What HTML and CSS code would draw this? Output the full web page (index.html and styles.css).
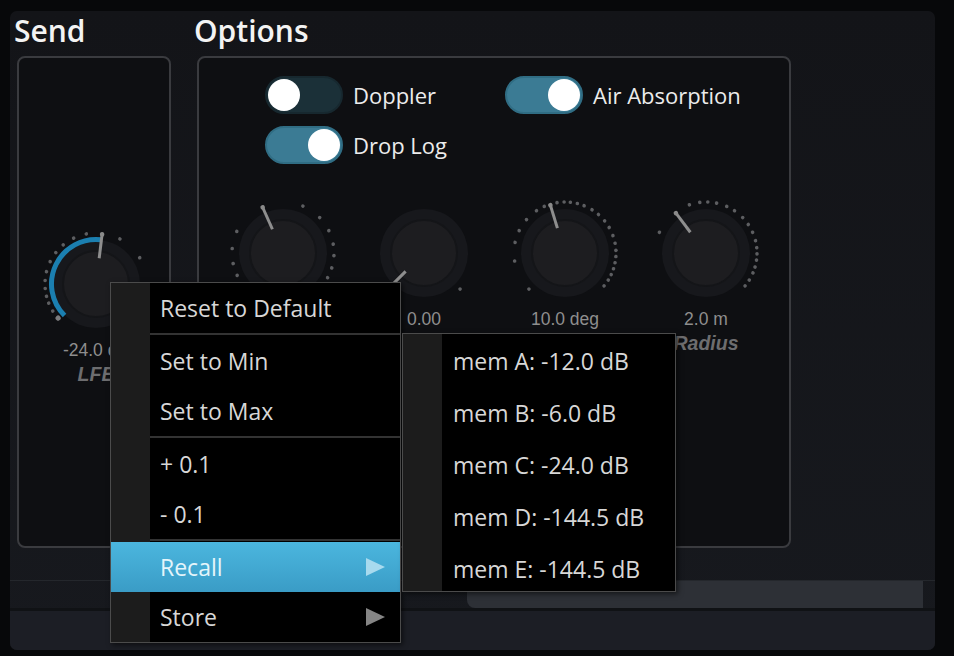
FILE: index.html
```html
<!DOCTYPE html>
<html>
<head>
<meta charset="utf-8">
<link rel="stylesheet" href="styles.css">
</head>
<body>
<div class="panel">
  <div class="main">
    <section class="col send">
      <h2 class="title">Send</h2>
      <div class="box send-box">
        <div class="knob">
          <svg class="dial" width="120" height="120" viewBox="0 0 120 120">
            <circle class="ring" cx="60" cy="60" r="44"/>
            <path class="arc" d="M28.53 91.47 A44.5 44.5 0 0 1 65.42 15.83"/>
            <circle class="cap" cx="60" cy="60" r="33"/>
            <g class="dots">
              <circle class="big" cx="60" cy="9" r="2.6" transform="rotate(-132 60 60)"/>
              <circle cx="60" cy="9" r="1.8" transform="rotate(-122 60 60)"/>
              <circle cx="60" cy="9" r="1.8" transform="rotate(-112 60 60)"/>
              <circle cx="60" cy="9" r="1.8" transform="rotate(-104 60 60)"/>
              <circle cx="60" cy="9" r="1.8" transform="rotate(-95 60 60)"/>
              <circle cx="60" cy="9" r="1.8" transform="rotate(-86 60 60)"/>
              <circle cx="60" cy="9" r="1.8" transform="rotate(-76 60 60)"/>
              <circle cx="60" cy="9" r="1.8" transform="rotate(-64 60 60)"/>
              <circle cx="60" cy="9" r="1.8" transform="rotate(-52 60 60)"/>
              <circle cx="60" cy="9" r="1.8" transform="rotate(-40 60 60)"/>
              <circle cx="60" cy="9" r="1.8" transform="rotate(-26 60 60)"/>
              <circle cx="60" cy="9" r="1.8" transform="rotate(-11 60 60)"/>
              <circle cx="60" cy="9" r="1.8" transform="rotate(28 60 60)"/>
              <circle cx="60" cy="9" r="1.8" transform="rotate(59 60 60)"/>
              <circle cx="60" cy="9" r="1.8" transform="rotate(95 60 60)"/>
              <circle cx="60" cy="9" r="1.8" transform="rotate(110 60 60)"/>
              <circle cx="60" cy="9" r="1.8" transform="rotate(125 60 60)"/>
            </g>
            <g transform="rotate(7 60 60)">
              <line class="ptr" x1="60" y1="34" x2="60" y2="11"/>
              <circle class="ptr-dot" cx="60" cy="10" r="2.3"/>
            </g>
          </svg>
          <div class="val">-24.0 dB</div>
          <div class="name">LFE</div>
        </div>
      </div>
    </section>
    <section class="col options">
      <h2 class="title">Options</h2>
      <div class="box opt-box">
        <div class="toggles">
          <div class="tg"><span class="switch off"><span class="thumb"></span></span><span class="tg-label">Doppler</span></div>
          <div class="tg"><span class="switch on"><span class="thumb"></span></span><span class="tg-label">Air Absorption</span></div>
          <div class="tg"><span class="switch on"><span class="thumb"></span></span><span class="tg-label">Drop Log</span></div>
        </div>
        <div class="knobs">
          <div class="knob">
            <svg class="dial" width="120" height="120" viewBox="0 0 120 120">
              <circle class="ring" cx="60" cy="60" r="44"/>
              <circle class="cap" cx="60" cy="60" r="33"/>
              <g class="dots">
                <circle cx="60" cy="9" r="1.8" transform="rotate(-116 60 60)"/>
                <circle cx="60" cy="9" r="1.8" transform="rotate(-102 60 60)"/>
                <circle cx="60" cy="9" r="1.8" transform="rotate(-85 60 60)"/>
                <circle cx="60" cy="9" r="1.8" transform="rotate(-65 60 60)"/>
                <circle cx="60" cy="9" r="1.8" transform="rotate(23 60 60)"/>
                <circle cx="60" cy="9" r="1.8" transform="rotate(46 60 60)"/>
                <circle cx="60" cy="9" r="1.8" transform="rotate(64 60 60)"/>
                <circle cx="60" cy="9" r="1.8" transform="rotate(80 60 60)"/>
                <circle cx="60" cy="9" r="1.8" transform="rotate(93 60 60)"/>
                <circle cx="60" cy="9" r="1.8" transform="rotate(107 60 60)"/>
                <circle cx="60" cy="9" r="1.8" transform="rotate(119 60 60)"/>
                <circle cx="60" cy="9" r="1.8" transform="rotate(131 60 60)"/>
              </g>
              <g transform="rotate(-24 60 60)">
                <line class="ptr" x1="60" y1="34" x2="60" y2="11"/>
                <circle class="ptr-dot" cx="60" cy="10" r="2.3"/>
              </g>
            </svg>
            <div class="val">&nbsp;</div>
            <div class="name">&nbsp;</div>
          </div>
          <div class="knob">
            <svg class="dial" width="120" height="120" viewBox="0 0 120 120">
              <circle class="ring" cx="60" cy="60" r="44"/>
              <circle class="cap" cx="60" cy="60" r="33"/>
              <g class="dots">
                <circle cx="60" cy="9" r="1.8" transform="rotate(135 60 60)"/>
              </g>
              <g transform="rotate(-135 60 60)">
                <line class="ptr" x1="60" y1="34" x2="60" y2="11"/>
                <circle class="ptr-dot" cx="60" cy="10" r="2.3"/>
              </g>
            </svg>
            <div class="val">0.00</div>
            <div class="name">&nbsp;</div>
          </div>
          <div class="knob">
            <svg class="dial" width="120" height="120" viewBox="0 0 120 120">
              <circle class="ring" cx="60" cy="60" r="44"/>
              <circle class="cap" cx="60" cy="60" r="33"/>
              <g class="dots">
                <circle cx="60" cy="9" r="1.8" transform="rotate(-135 60 60)"/>
                <circle cx="60" cy="9" r="1.8" transform="rotate(-99 60 60)"/>
                <circle cx="60" cy="9" r="1.8" transform="rotate(-78 60 60)"/>
                <circle cx="60" cy="9" r="1.8" transform="rotate(-64 60 60)"/>
                <circle cx="60" cy="9" r="1.8" transform="rotate(-49 60 60)"/>
                <circle cx="60" cy="9" r="1.8" transform="rotate(-34 60 60)"/>
                <circle cx="60" cy="9" r="1.8" transform="rotate(-24 60 60)"/>
                <circle cx="60" cy="9" r="1.8" transform="rotate(-9 60 60)"/>
                <circle cx="60" cy="9" r="1.8" transform="rotate(-1 60 60)"/>
                <circle cx="60" cy="9" r="1.8" transform="rotate(6 60 60)"/>
                <circle cx="60" cy="9" r="1.8" transform="rotate(14 60 60)"/>
                <circle cx="60" cy="9" r="1.8" transform="rotate(22 60 60)"/>
                <circle cx="60" cy="9" r="1.8" transform="rotate(32 60 60)"/>
                <circle cx="60" cy="9" r="1.8" transform="rotate(41 60 60)"/>
                <circle cx="60" cy="9" r="1.8" transform="rotate(51 60 60)"/>
                <circle cx="60" cy="9" r="1.8" transform="rotate(60 60 60)"/>
                <circle cx="60" cy="9" r="1.8" transform="rotate(70 60 60)"/>
                <circle cx="60" cy="9" r="1.8" transform="rotate(79 60 60)"/>
                <circle cx="60" cy="9" r="1.8" transform="rotate(87 60 60)"/>
                <circle cx="60" cy="9" r="1.8" transform="rotate(94 60 60)"/>
                <circle cx="60" cy="9" r="1.8" transform="rotate(101 60 60)"/>
                <circle cx="60" cy="9" r="1.8" transform="rotate(108 60 60)"/>
                <circle cx="60" cy="9" r="1.8" transform="rotate(115 60 60)"/>
                <circle cx="60" cy="9" r="1.8" transform="rotate(122 60 60)"/>
                <circle cx="60" cy="9" r="1.8" transform="rotate(130 60 60)"/>
              </g>
              <g transform="rotate(-17 60 60)">
                <line class="ptr" x1="60" y1="34" x2="60" y2="11"/>
                <circle class="ptr-dot" cx="60" cy="10" r="2.3"/>
              </g>
            </svg>
            <div class="val">10.0 deg</div>
            <div class="name">&nbsp;</div>
          </div>
          <div class="knob">
            <svg class="dial" width="120" height="120" viewBox="0 0 120 120">
              <circle class="ring" cx="60" cy="60" r="44"/>
              <circle class="cap" cx="60" cy="60" r="33"/>
              <g class="dots">
                <circle cx="60" cy="9" r="1.8" transform="rotate(-66 60 60)"/>
                <circle cx="60" cy="9" r="1.8" transform="rotate(-19 60 60)"/>
                <circle cx="60" cy="9" r="1.8" transform="rotate(-7 60 60)"/>
                <circle cx="60" cy="9" r="1.8" transform="rotate(2 60 60)"/>
                <circle cx="60" cy="9" r="1.8" transform="rotate(12 60 60)"/>
                <circle cx="60" cy="9" r="1.8" transform="rotate(24 60 60)"/>
                <circle cx="60" cy="9" r="1.8" transform="rotate(34 60 60)"/>
                <circle cx="60" cy="9" r="1.8" transform="rotate(46 60 60)"/>
                <circle cx="60" cy="9" r="1.8" transform="rotate(56 60 60)"/>
                <circle cx="60" cy="9" r="1.8" transform="rotate(66 60 60)"/>
                <circle cx="60" cy="9" r="1.8" transform="rotate(76 60 60)"/>
                <circle cx="60" cy="9" r="1.8" transform="rotate(84 60 60)"/>
                <circle cx="60" cy="9" r="1.8" transform="rotate(91 60 60)"/>
                <circle cx="60" cy="9" r="1.8" transform="rotate(98 60 60)"/>
                <circle cx="60" cy="9" r="1.8" transform="rotate(106 60 60)"/>
                <circle cx="60" cy="9" r="1.8" transform="rotate(113 60 60)"/>
                <circle cx="60" cy="9" r="1.8" transform="rotate(122 60 60)"/>
                <circle cx="60" cy="9" r="1.8" transform="rotate(130 60 60)"/>
              </g>
              <g transform="rotate(-37 60 60)">
                <line class="ptr" x1="60" y1="34" x2="60" y2="11"/>
                <circle class="ptr-dot" cx="60" cy="10" r="2.3"/>
              </g>
            </svg>
            <div class="val">2.0 m</div>
            <div class="name">Radius</div>
          </div>
        </div>
      </div>
    </section>
  </div>
  <div class="footer"><div class="track"></div></div>
  <div class="bottom"></div>
</div>

<div class="menu">
  <div class="mi">Reset to Default</div>
  <div class="sep"></div>
  <div class="mi">Set to Min</div>
  <div class="mi">Set to Max</div>
  <div class="sep"></div>
  <div class="mi">+ 0.1</div>
  <div class="mi">- 0.1</div>
  <div class="sep"></div>
  <div class="mi active"><span>Recall</span><span class="arrow"></span></div>
  <div class="mi"><span>Store</span><span class="arrow"></span></div>
</div>

<div class="submenu">
  <div class="mi">mem A: -12.0 dB</div>
  <div class="mi">mem B: -6.0 dB</div>
  <div class="mi">mem C: -24.0 dB</div>
  <div class="mi">mem D: -144.5 dB</div>
  <div class="mi">mem E: -144.5 dB</div>
</div>
</body>
</html>
```

FILE: styles.css
```css
html, body {
  margin: 0;
  padding: 0;
}
body {
  background: #07080a;
  width: 954px;
  height: 656px;
  overflow: hidden;
  position: relative;
  font-family: "Open Sans", "Noto Sans", sans-serif;
  padding-top: 11px;
  box-sizing: border-box;
}

.panel {
  margin-left: 10px;
  width: 925px;
  height: 639px;
  border-radius: 7px;
  overflow: hidden;
  display: flex;
  flex-direction: column;
  background: linear-gradient(#131418, #17191e);
}

.main {
  height: 569px;
  display: flex;
  gap: 26px;
  padding-left: 7px;
}

.col {
  display: flex;
  flex-direction: column;
}

.title {
  margin: 0 0 5px -3px;
  height: 40px;
  font-weight: 600;
  font-size: 30px;
  line-height: 40px;
  color: #f3f3f3;
}

.box {
  height: 492px;
  box-sizing: border-box;
  border: 2px solid #3a3b3f;
  border-radius: 8px;
  background: #0e0f12;
}

.send-box {
  width: 154px;
  padding: 166px 0 0 4px;
  display: flex;
  justify-content: center;
}

.opt-box {
  width: 594px;
  padding-top: 18px;
}

.toggles {
  margin-left: 66px;
  display: grid;
  grid-template-columns: 240px auto;
  row-gap: 12px;
}

.tg {
  display: flex;
  align-items: center;
  height: 38px;
  gap: 10px;
}

.switch {
  width: 78px;
  height: 38px;
  box-sizing: border-box;
  border-radius: 19px;
  display: flex;
  align-items: center;
  padding: 0 1px;
}
.switch.off {
  background: #1b3038;
  border: 2px solid #17282f;
}
.switch.on {
  background: #3b7b94;
  border: 2px solid #306d84;
  justify-content: flex-end;
}
.thumb {
  width: 32px;
  height: 32px;
  border-radius: 50%;
  background: #ffffff;
}

.tg-label {
  font-size: 22px;
  color: #ececec;
}

.knobs {
  margin: 29px 0 0 24px;
  display: flex;
  gap: 21px;
}

.knob {
  width: 120px;
  display: flex;
  flex-direction: column;
  align-items: center;
}

.dial {
  display: block;
}
.ring { fill: #17181c; }
.cap { fill: #1d1d20; stroke: #141518; stroke-width: 2; }
.arc { fill: none; stroke: #1b7fb0; stroke-width: 5; }
.dots circle { fill: #5d5e61; }
.dots circle.big { fill: #7c7c7e; }
.ptr { stroke: #8e8e8e; stroke-width: 3; }
.ptr-dot { fill: #8a8a8a; }

.val {
  margin-top: -4px;
  height: 20px;
  line-height: 20px;
  font-family: "Liberation Sans", Arial, sans-serif;
  font-size: 17.5px;
  color: #8e8e8e;
  white-space: nowrap;
}
.name {
  margin-top: 3px;
  line-height: 22px;
  font-family: "Liberation Sans", Arial, sans-serif;
  font-size: 19.5px;
  font-weight: bold;
  font-style: italic;
  color: #6d6d6f;
}

.footer {
  height: 28px;
  box-sizing: border-box;
  border-top: 1px solid #24272c;
  display: flex;
  justify-content: flex-end;
}
.track {
  width: 456px;
  margin-right: 12px;
  background: #2d3036;
  border-bottom-left-radius: 8px;
}
.bottom {
  flex: 1;
  border-top: 3px solid #101215;
  background: #1c1e25;
}

/* context menus */
.menu, .submenu {
  position: absolute;
  box-sizing: border-box;
  border: 1px solid #4b4b4b;
  background: linear-gradient(90deg, #1c1c1c 39px, #000000 39px);
  box-shadow: 2px 2px 5px rgba(0, 0, 0, 0.55);
  font-size: 23px;
  color: #d7d7d7;
}
.menu {
  left: 110px;
  top: 282px;
  width: 291px;
}
.submenu {
  left: 402px;
  top: 333px;
  width: 274px;
  height: 259px;
  padding-top: 1px;
  overflow: hidden;
}

.mi {
  height: 50px;
  display: flex;
  align-items: center;
  justify-content: space-between;
  padding: 0 15px 0 49px;
  white-space: nowrap;
}
.submenu .mi {
  height: 52px;
  padding-left: 50px;
}
.sep {
  height: 3px;
  margin-left: 39px;
  background: linear-gradient(#333333 0 2px, transparent 2px);
}
.mi.active {
  background: linear-gradient(#4bb6de, #3a9cc6);
  color: #e4f5fb;
}
.arrow {
  width: 0;
  height: 0;
  border-left: 19px solid #858585;
  border-top: 9.5px solid transparent;
  border-bottom: 9.5px solid transparent;
}
.active .arrow {
  border-left-color: #a8daee;
}
```
